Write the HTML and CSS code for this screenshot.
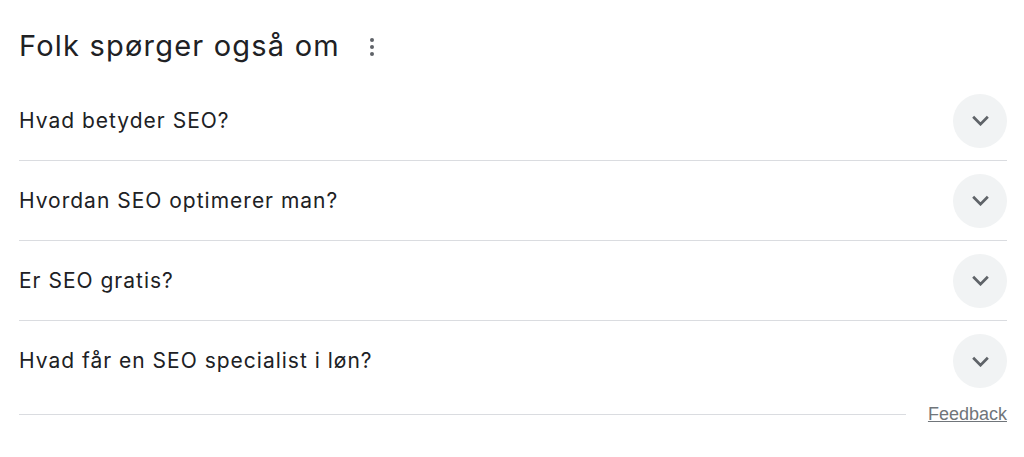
FILE: index.html
```html
<!DOCTYPE html>
<html lang="da">
  <head>
    <meta charset="UTF-8" />
    <meta name="viewport" content="width=device-width, initial-scale=1.0" />
    <title>Folk spørger også om</title>
    <link rel="stylesheet" href="styles.css">
  </head>
  <body>
    <div class="paa">
      <div class="paa-head">
        <h2 class="paa-title">Folk spørger også om</h2>
        <span class="paa-menu"><i></i><i></i><i></i></span>
      </div>
      <div class="paa-row">
        <span class="paa-q">Hvad betyder SEO?</span>
        <span class="paa-btn"><svg viewBox="0 0 20 12"><polyline points="2,2 10,10 18,2"/></svg></span>
      </div>
      <div class="paa-row">
        <span class="paa-q">Hvordan SEO optimerer man?</span>
        <span class="paa-btn"><svg viewBox="0 0 20 12"><polyline points="2,2 10,10 18,2"/></svg></span>
      </div>
      <div class="paa-row">
        <span class="paa-q">Er SEO gratis?</span>
        <span class="paa-btn"><svg viewBox="0 0 20 12"><polyline points="2,2 10,10 18,2"/></svg></span>
      </div>
      <div class="paa-row last">
        <span class="paa-q">Hvad får en SEO specialist i løn?</span>
        <span class="paa-btn"><svg viewBox="0 0 20 12"><polyline points="2,2 10,10 18,2"/></svg></span>
      </div>
      <div class="paa-foot">
        <span class="paa-line"></span>
        <a class="paa-feedback" href="#">Feedback</a>
      </div>
    </div>
  </body>
</html>
```

FILE: styles.css
```css
body {
  margin: 0;
  background: #fff;
  font-family: Inter, "Open Sans", "Liberation Sans", Arial, sans-serif;
  color: #202124;
}
.paa {
  width: 988px;
  padding-left: 19px;
}
.paa-head {
  height: 81px;
  display: flex;
  align-items: center;
  padding-top: 10px;
  box-sizing: border-box;
}
.paa-title {
  margin: 0;
  font-size: 29px;
  font-weight: 400;
  line-height: 36px;
  letter-spacing: 1.2px;
}
.paa-menu {
  margin-left: 30px;
  display: flex;
  flex-direction: column;
  gap: 3px;
  padding-top: 2px;
}
.paa-menu i {
  width: 4px;
  height: 4px;
  border-radius: 50%;
  background: #5f6368;
}
.paa-row {
  height: 80px;
  display: flex;
  align-items: center;
  justify-content: space-between;
  border-bottom: 1px solid #dadce0;
  box-sizing: border-box;
}
.paa-row.last {
  border-bottom: none;
}
.paa-q {
  font-size: 21px;
  line-height: 28px;
  letter-spacing: 1px;
}
.paa-btn {
  width: 54px;
  height: 54px;
  border-radius: 50%;
  background: #f1f3f4;
  display: flex;
  align-items: center;
  justify-content: center;
}
.paa-btn svg {
  width: 19px;
  height: 11px;
  fill: none;
  stroke: #5f6368;
  stroke-width: 3;
}
.paa-foot {
  display: flex;
  align-items: center;
  margin-top: 2px;
}
.paa-line {
  flex: 1;
  border-top: 1px solid #dadce0;
  margin-right: 22px;
}
.paa-feedback {
  font-family: "Liberation Sans", Arial, sans-serif;
  font-size: 18px;
  color: #70757a;
  line-height: 22px;
}
```
